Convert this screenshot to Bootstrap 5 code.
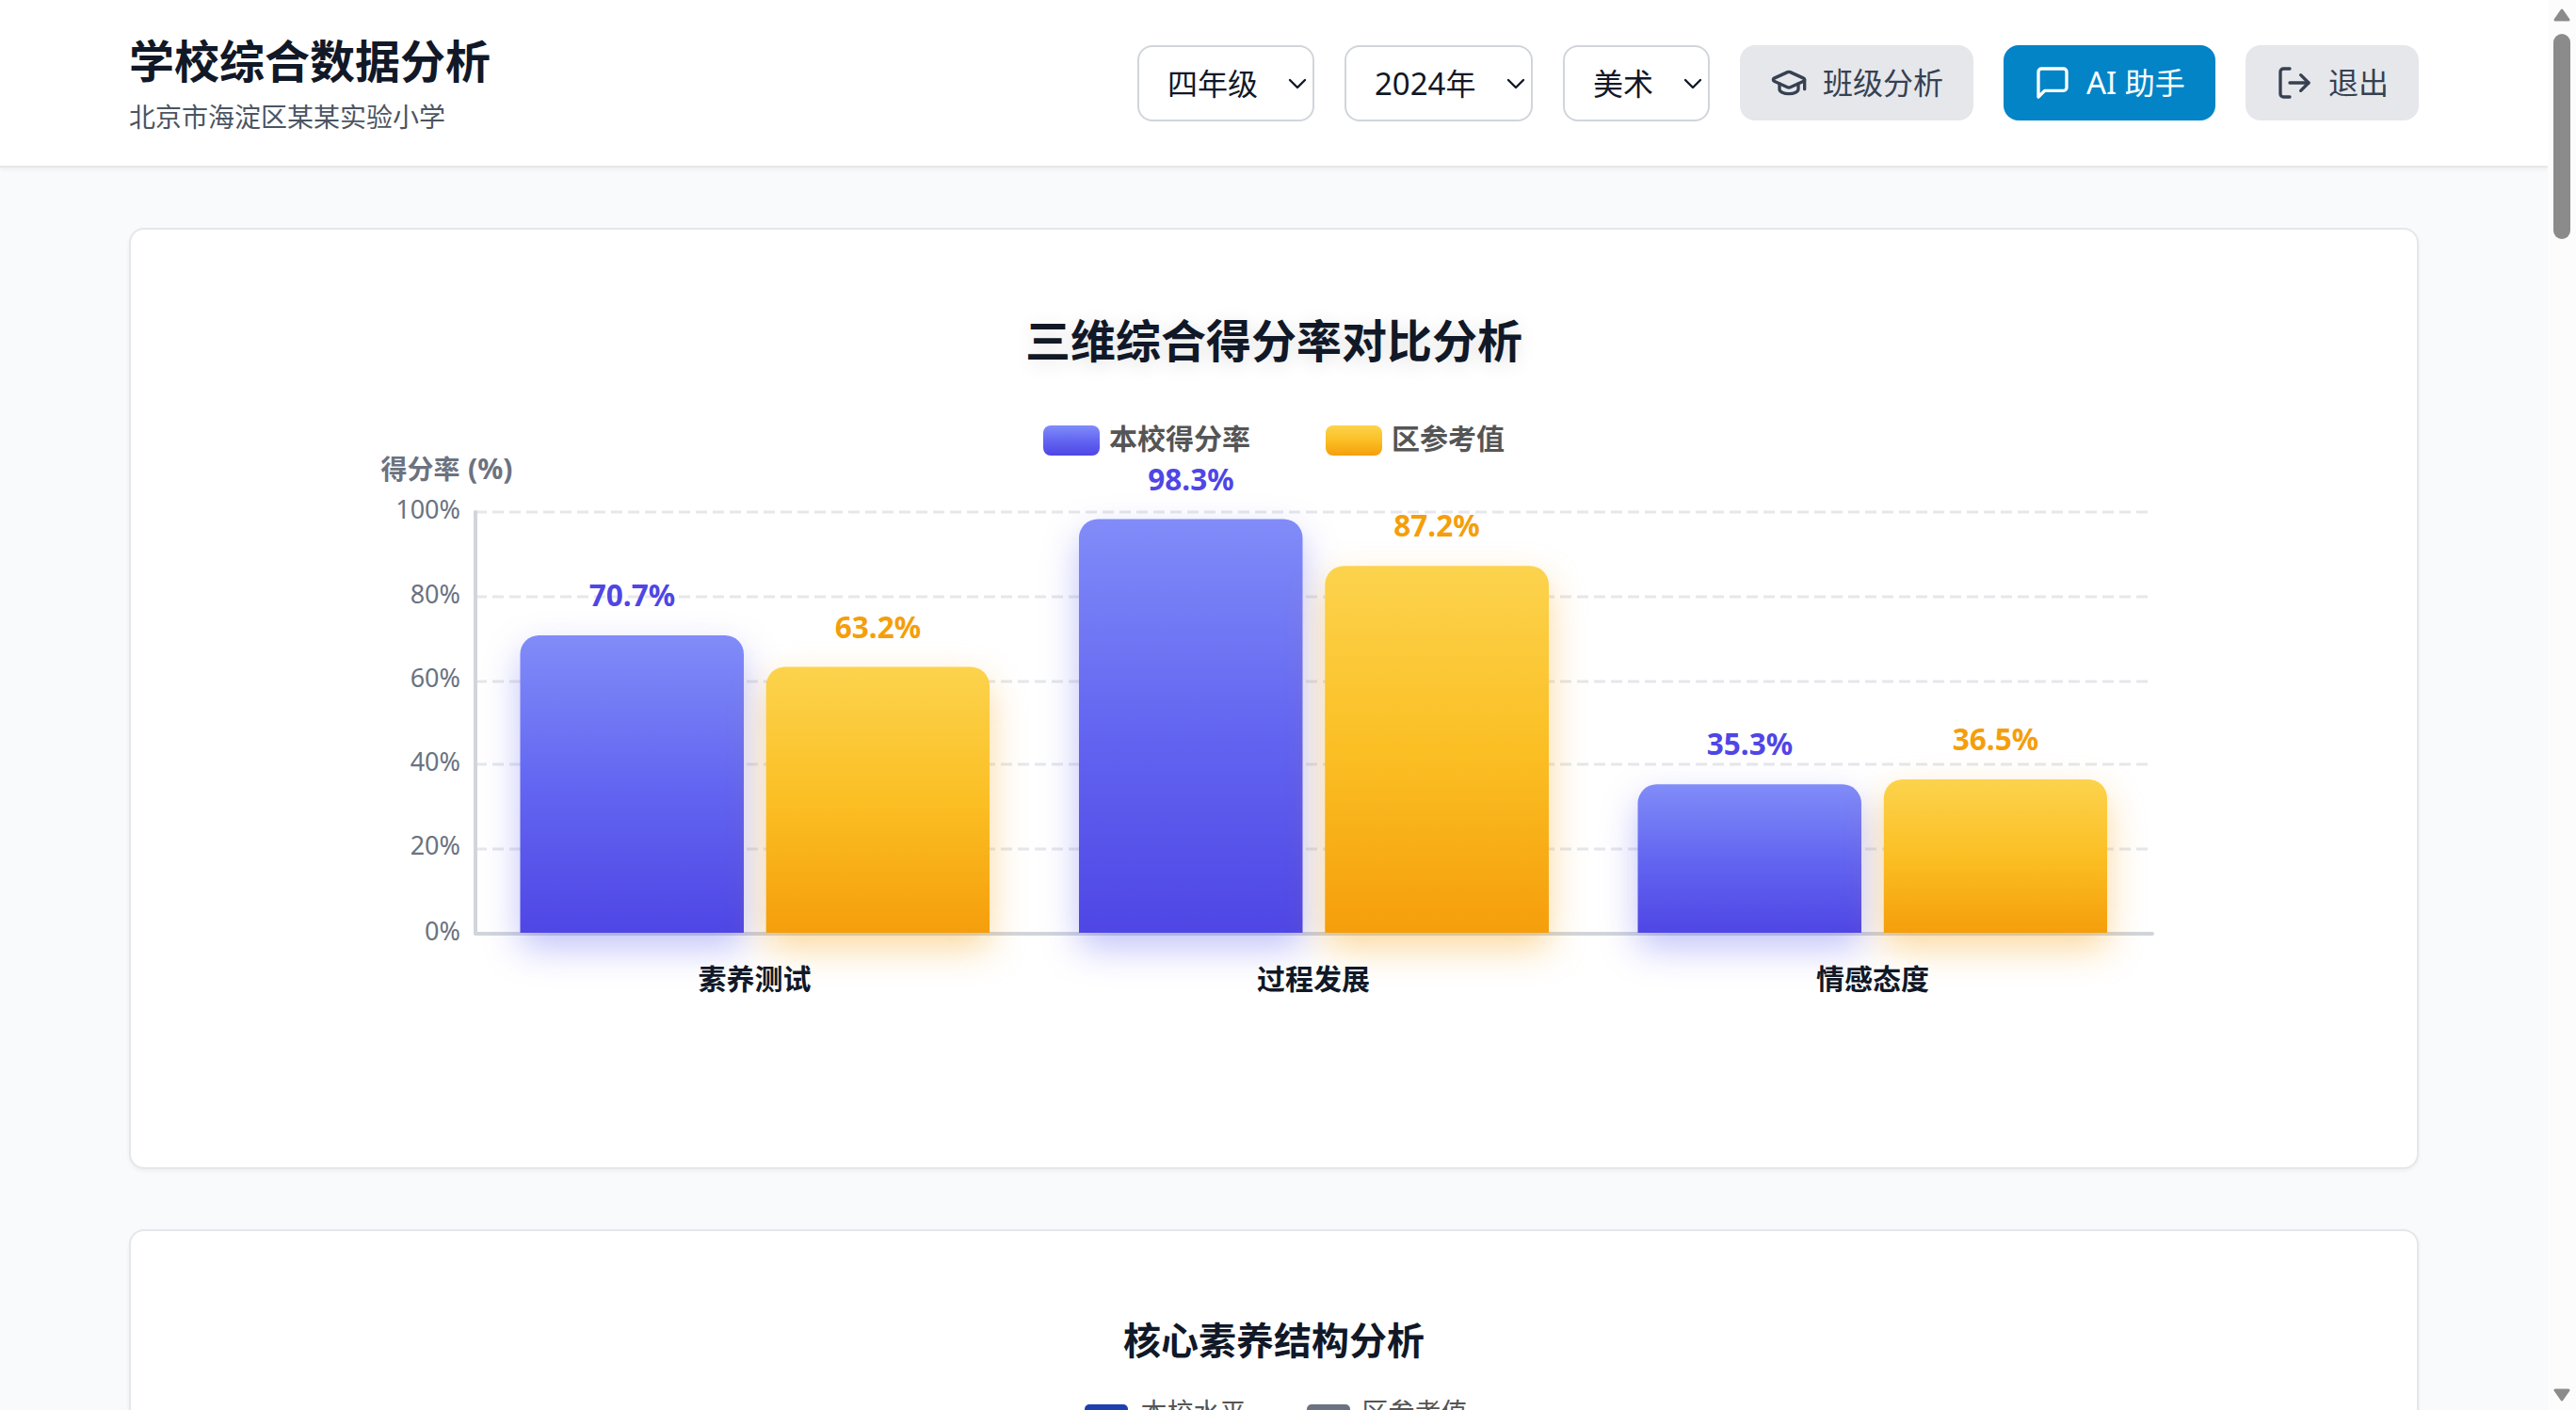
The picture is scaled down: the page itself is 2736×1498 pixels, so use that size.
<!DOCTYPE html>
<html lang="zh-CN">
<head>
<meta charset="utf-8">
<meta name="viewport" content="width=device-width, initial-scale=1">
<title>学校综合数据分析</title>
<link rel="stylesheet" href="https://cdn.jsdelivr.net/npm/bootstrap@5.3.0/dist/css/bootstrap.min.css">
<style>
  body { font-family: "Noto Sans", "Noto Sans CJK SC", sans-serif; color: #111827; background: #f9fafc; height: 1498px; }
  .page-view { width: 2706px; height: 1498px; overflow: hidden; }
  .top-header { height: 178px; padding: 33px 137px 0; background: #fff; border-bottom: 2px solid #e5e7eb; box-shadow: 0 2px 4px rgba(0,0,0,.05); }
  .app-title { font-size: 48px; line-height: 64px; font-weight: 700; }
  .app-school { font-size: 28px; line-height: 40px; margin-top: 7px; color: #4b5563; }
  .tool-row { gap: 32px; padding-top: 15px; }
  .tool { height: 80px; border: 0; border-radius: 16px; font-size: 32px; line-height: 48px; gap: 16px; padding: 0 32px; white-space: nowrap; }
  .tool svg { flex: none; }
  .tool-gray { background: #e5e7eb; color: #374151; }
  .tool-blue { background: #0284c7; color: #fff; width: 225px; }
  .picker { height: 81px; border: 2px solid #d1d5db; color: #111827; background: #fff; padding: 0 6px 0 30px; }
  .picker .digits { font-size: 33px; }
  .tool .latin { font-size: 33px; }
  .panel { border: 2px solid #e5e7eb; border-radius: 16px; background: #fff; box-shadow: 0 2px 4px rgba(0,0,0,.05); }
  .panels { padding: 64px 137px 0; gap: 64px; }
  .panel-first { height: 1000px; padding-top: 86px; }
  .panel-second { height: 600px; flex: none; padding-top: 88px; }
  .chart-title { font-size: 48px; line-height: 64px; font-weight: 700; text-shadow: 0 4px 20px rgba(0,0,0,.12); }
  .legend-row { gap: 80px; margin-top: 58px; height: 32px; font-size: 30px; font-weight: 700; line-height: 32px; color: #555; }
  .legend-label { margin-top: -4px; }
  .swatch { width: 60px; height: 32px; border-radius: 8px; margin-right: 10px; }
  .swatch-indigo { background: linear-gradient(#818cf8, #6366f1 50%, #4f46e5); }
  .swatch-amber { background: linear-gradient(#fcd34d, #fbbf24 50%, #f59e0b); }
  .sub-title { font-size: 40px; line-height: 56px; font-weight: 700; }
  .sub-legend { gap: 64px; margin-top: 38px; padding-left: 5px; font-size: 28px; line-height: 28px; color: #555; }
  .sub-swatch { width: 46px; height: 24px; border-radius: 5px; margin-right: 13px; }
  .sub-label { margin-top: -4px; margin-bottom: 4px; }
  .plot { overflow: visible; }
  .grid-line { stroke: #e5e7eb; stroke-width: 3; stroke-dasharray: 12 6; }
  .axis-line { fill: none; stroke: #d1d5db; stroke-width: 4; stroke-linecap: round; stroke-linejoin: round; }
  .tick-text { font-size: 27px; fill: #6b7280; text-anchor: end; }
  .name-text { font-size: 28px; font-weight: 700; fill: #6b7280; }
  .name-unit { font-size: 30px; }
  .cat-text { font-size: 30px; font-weight: 700; fill: #111827; text-anchor: middle; }
  .val-text { font-size: 31.5px; font-weight: 700; text-anchor: middle; }
  .bar-indigo { fill: url(#indigoFill); filter: drop-shadow(0 16px 19px rgba(99,102,241,.4)); }
  .bar-amber { fill: url(#amberFill); filter: drop-shadow(0 16px 19px rgba(245,158,11,.4)); }
  .t-indigo { fill: #4f46e5; } .t-amber { fill: #f59e0b; }
  .scroll-track { width: 30px; height: 1498px; background: #fcfcfc; padding: 9px 6px; }
  .scroll-thumb { width: 18px; height: 218px; border-radius: 9px; background: #8b8b8b; margin-top: 13px; }
</style>
<script src="https://cdn.jsdelivr.net/npm/bootstrap@5.3.0/dist/js/bootstrap.bundle.min.js"></script>
</head>
<body class="d-flex overflow-hidden">
<div class="page-view d-flex flex-column flex-shrink-0">
  <header class="top-header d-flex justify-content-between align-items-start flex-shrink-0">
    <div>
      <h1 class="app-title mb-0">学校综合数据分析</h1>
      <p class="app-school mb-0">北京市海淀区某某实验小学</p>
    </div>
    <div class="tool-row d-flex align-items-start">
      <button class="btn tool picker d-flex align-items-center justify-content-between" style="width:188px"><span>四年级</span>
        <svg width="20" height="12" viewBox="0 0 20 12" fill="none" stroke="#111827" stroke-width="2.4" stroke-linecap="round" stroke-linejoin="round"><path d="M2 2l8 8 8-8"/></svg></button>
      <button class="btn tool picker d-flex align-items-center justify-content-between" style="width:200px"><span><span class="digits">2024</span>年</span>
        <svg width="20" height="12" viewBox="0 0 20 12" fill="none" stroke="#111827" stroke-width="2.4" stroke-linecap="round" stroke-linejoin="round"><path d="M2 2l8 8 8-8"/></svg></button>
      <button class="btn tool picker d-flex align-items-center justify-content-between" style="width:156px"><span>美术</span>
        <svg width="20" height="12" viewBox="0 0 20 12" fill="none" stroke="#111827" stroke-width="2.4" stroke-linecap="round" stroke-linejoin="round"><path d="M2 2l8 8 8-8"/></svg></button>
      <button class="btn tool tool-gray d-flex align-items-center">
        <svg width="40" height="40" viewBox="0 0 24 24" fill="none" stroke="currentColor" stroke-width="2" stroke-linecap="round" stroke-linejoin="round"><path d="M21.42 10.922a1 1 0 0 0-.019-1.838L12.83 5.18a2 2 0 0 0-1.66 0L2.6 9.08a1 1 0 0 0 0 1.832l8.57 3.908a2 2 0 0 0 1.66 0z"/><path d="M22 10v6"/><path d="M6 12.5V16a6 3 0 0 0 12 0v-3.5"/></svg>
        <span>班级分析</span></button>
      <button class="btn tool tool-blue d-flex align-items-center">
        <svg width="40" height="40" viewBox="0 0 24 24" fill="none" stroke="currentColor" stroke-width="2" stroke-linecap="round" stroke-linejoin="round"><path d="M21 15a2 2 0 0 1-2 2H7l-4 4V5a2 2 0 0 1 2-2h14a2 2 0 0 1 2 2z"/></svg>
        <span><span class="latin">AI </span>助手</span></button>
      <button class="btn tool tool-gray d-flex align-items-center">
        <svg width="40" height="40" viewBox="0 0 24 24" fill="none" stroke="currentColor" stroke-width="2" stroke-linecap="round" stroke-linejoin="round"><path d="M9 21H5a2 2 0 0 1-2-2V5a2 2 0 0 1 2-2h4"/><path d="M16 17l5-5-5-5"/><path d="M21 12H9"/></svg>
        <span>退出</span></button>
    </div>
  </header>

  <main class="panels d-flex flex-column">
    <section class="panel panel-first flex-shrink-0">
      <h2 class="chart-title text-center mb-0">三维综合得分率对比分析</h2>
      <div class="legend-row d-flex justify-content-center align-items-center">
        <div class="d-flex align-items-center"><span class="swatch swatch-indigo"></span><span class="legend-label">本校得分率</span></div>
        <div class="d-flex align-items-center"><span class="swatch swatch-amber"></span><span class="legend-label">区参考值</span></div>
      </div>
      <svg class="plot d-block" width="2428" height="616" viewBox="139 484 2428 616">
        <defs>
          <linearGradient id="indigoFill" x1="0" y1="0" x2="0" y2="1"><stop offset="0" stop-color="#818cf8"/><stop offset=".5" stop-color="#6366f1"/><stop offset="1" stop-color="#4f46e5"/></linearGradient>
          <linearGradient id="amberFill" x1="0" y1="0" x2="0" y2="1"><stop offset="0" stop-color="#fcd34d"/><stop offset=".5" stop-color="#fbbf24"/><stop offset="1" stop-color="#f59e0b"/></linearGradient>
        </defs>
        <text class="name-text" x="404.5" y="508.5">得分率<tspan class="name-unit" x="497">(%)</tspan></text>
        <g class="grid-line">
          <path d="M505 544H2286M505 634H2286M505 724H2286M505 812H2286M505 902H2286"/>
        </g>
        <path class="axis-line" d="M505 544V992H2286"/>
        <g class="tick-text">
          <text x="489" y="551">100%</text><text x="489" y="640.5">80%</text><text x="489" y="730.3">60%</text>
          <text x="489" y="819">40%</text><text x="489" y="908.3">20%</text><text x="489" y="998.5">0%</text>
        </g>
        <path class="bar-indigo" d="M552.5 991V695a20 20 0 0 1 20-20H770a20 20 0 0 1 20 20V991z"/>
        <path class="bar-indigo" d="M1146 991V571.5a20 20 0 0 1 20-20H1363.5a20 20 0 0 1 20 20V991z"/>
        <path class="bar-indigo" d="M1739.5 991V853.3a20 20 0 0 1 20-20H1957a20 20 0 0 1 20 20V991z"/>
        <path class="bar-amber" d="M813.7 991V728.5a20 20 0 0 1 20-20H1031a20 20 0 0 1 20 20V991z"/>
        <path class="bar-amber" d="M1407.3 991V621.2a20 20 0 0 1 20-20H1625a20 20 0 0 1 20 20V991z"/>
        <path class="bar-amber" d="M2000.8 991V848a20 20 0 0 1 20-20H2218a20 20 0 0 1 20 20V991z"/>
        <g class="val-text t-indigo"><text x="671.5" y="644.3">70.7%</text><text x="1265" y="520.5">98.3%</text><text x="1858.5" y="802.3">35.3%</text></g>
        <g class="val-text t-amber"><text x="932.5" y="677.5">63.2%</text><text x="1526" y="570.3">87.2%</text><text x="2119.5" y="797.3">36.5%</text></g>
        <g class="cat-text"><text x="801.5" y="1051">素养测试</text><text x="1395" y="1051">过程发展</text><text x="1989" y="1051">情感态度</text></g>
      </svg>
    </section>

    <section class="panel panel-second">
      <h2 class="sub-title text-center mb-0">核心素养结构分析</h2>
      <div class="sub-legend d-flex justify-content-center">
        <div class="d-flex align-items-center"><span class="sub-swatch" style="background:#1e40af"></span><span class="sub-label">本校水平</span></div>
        <div class="d-flex align-items-center"><span class="sub-swatch" style="background:#6b7280"></span><span class="sub-label">区参考值</span></div>
      </div>
    </section>
  </main>
</div>
<div class="scroll-track d-flex flex-column flex-shrink-0">
  <svg width="18" height="14" viewBox="0 0 18 14"><path d="M9 2l7 10H2z" fill="#8b8b8b" stroke="#8b8b8b" stroke-width="3" stroke-linejoin="round"/></svg>
  <div class="scroll-thumb"></div>
  <svg class="mt-auto" width="18" height="14" viewBox="0 0 18 14"><path d="M9 12L2 2h14z" fill="#8b8b8b" stroke="#8b8b8b" stroke-width="3" stroke-linejoin="round"/></svg>
</div>
</body>
</html>
